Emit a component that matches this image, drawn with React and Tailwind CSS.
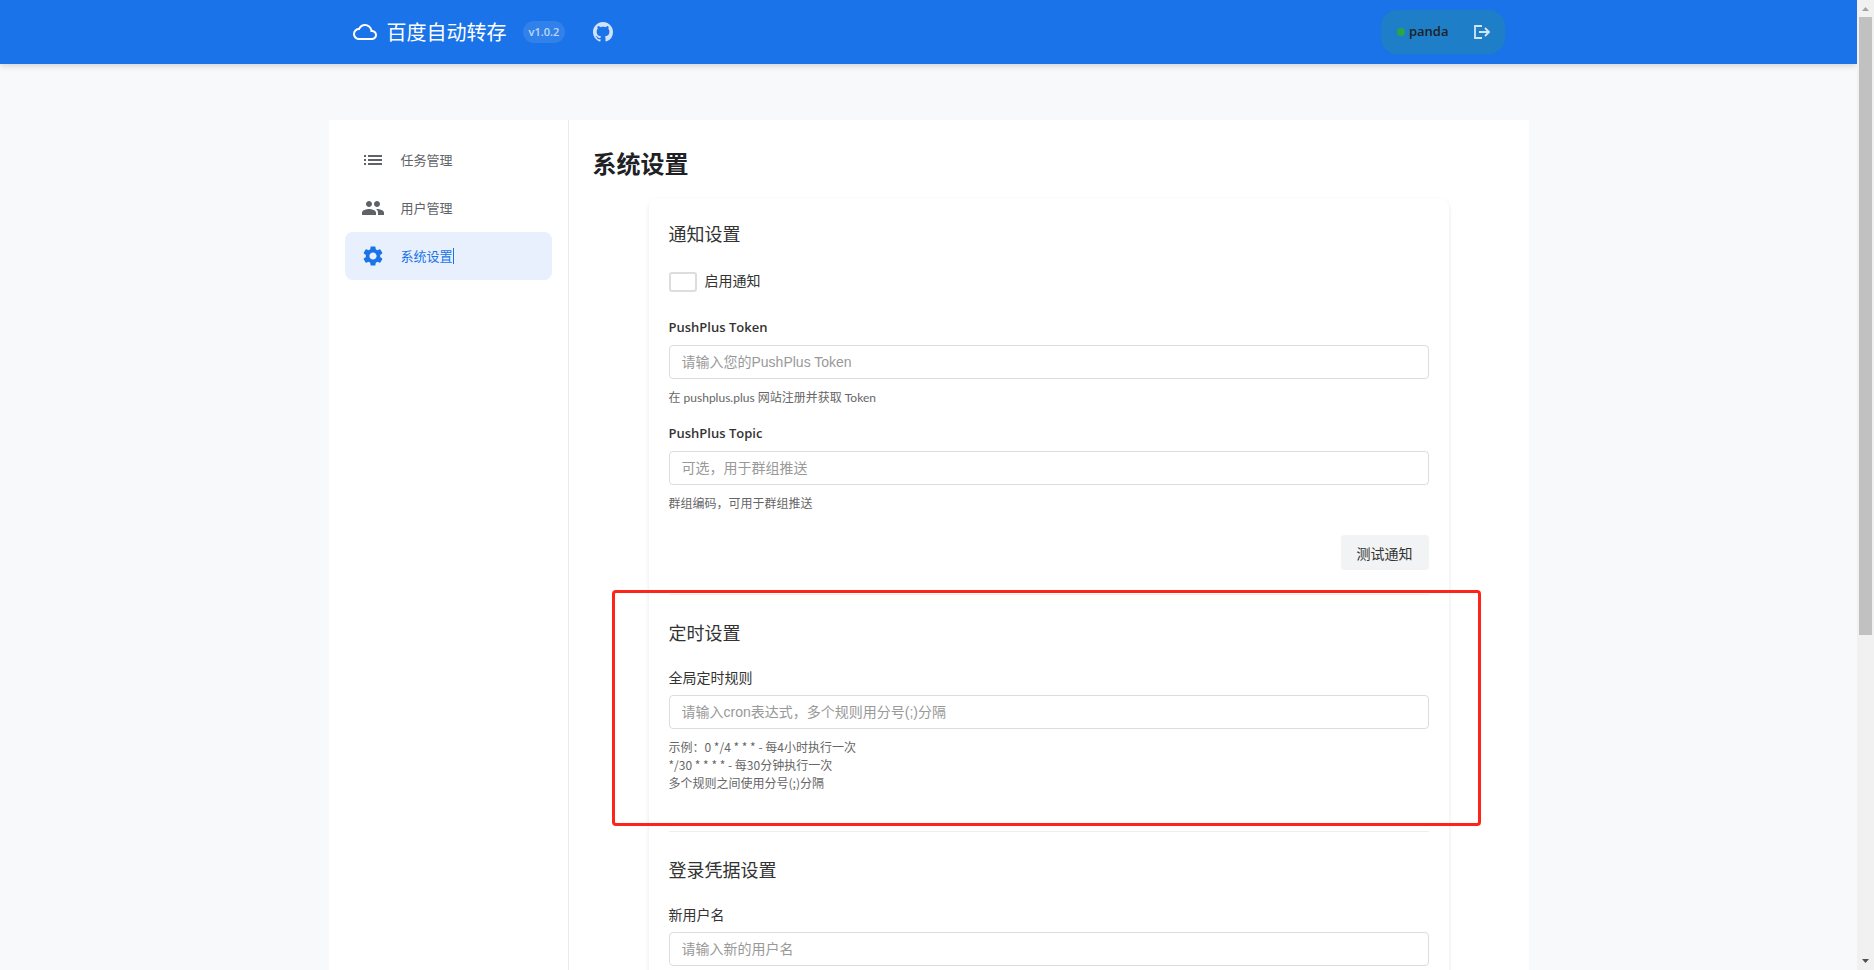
import { useState } from "react";
import { MdCloudQueue, MdList, MdPeople, MdSettings } from "react-icons/md";

const NAV_ITEMS = [
  { id: "tasks", label: "任务管理", icon: MdList },
  { id: "users", label: "用户管理", icon: MdPeople },
  { id: "settings", label: "系统设置", icon: MdSettings },
];

function GithubIcon() {
  return (
    <svg viewBox="0 0 16 16" className="size-5 fill-current" aria-hidden="true">
      <path d="M8 0C3.58 0 0 3.58 0 8c0 3.54 2.29 6.53 5.47 7.59.4.07.55-.17.55-.38 0-.19-.01-.82-.01-1.49-2.01.37-2.53-.49-2.69-.94-.09-.23-.48-.94-.82-1.13-.28-.15-.68-.52-.01-.53.63-.01 1.08.58 1.23.82.72 1.21 1.87.87 2.33.66.07-.52.28-.87.51-1.07-1.78-.2-3.64-.89-3.64-3.95 0-.87.31-1.59.82-2.15-.08-.2-.36-1.02.08-2.12 0 0 .67-.21 2.2.82.64-.18 1.32-.27 2-.27s1.36.09 2 .27c1.53-1.04 2.2-.82 2.2-.82.44 1.1.16 1.92.08 2.12.51.56.82 1.27.82 2.15 0 3.07-1.87 3.75-3.65 3.95.29.25.54.73.54 1.48 0 1.07-.01 1.93-.01 2.2 0 .21.15.46.55.38A8.01 8.01 0 0 0 16 8c0-4.42-3.58-8-8-8z" />
    </svg>
  );
}

function LogoutIcon() {
  return (
    <svg viewBox="0 0 18 14" className="h-3.5 w-[18px]" fill="none" stroke="currentColor" strokeWidth="1.8" aria-hidden="true">
      <path d="M9 1H2v12h7" />
      <path d="M6 7h10M12 3l4 4-4 4" />
    </svg>
  );
}

function Header() {
  return (
    <header className="relative z-10 shrink-0 bg-[#1a73e8] shadow-[0_2px_6px_rgba(60,64,67,0.2)]">
      <div className="mx-auto flex h-16 max-w-[1200px] items-center justify-between px-6">
        <div className="flex items-center text-white">
          <MdCloudQueue size={24} />
          <span className="ml-2.5 text-xl leading-7">百度自动转存</span>
          <span className="ml-4 rounded-xl bg-white/10 px-1.5 font-['Open_Sans',sans-serif] text-[11px] leading-[22px] font-semibold text-white/70">
            v1.0.2
          </span>
          <a href="#github" aria-label="GitHub" className="ml-7 text-white/80">
            <GithubIcon />
          </a>
        </div>

        <div className="flex h-11 items-center rounded-2xl bg-[#1e7ec8] pr-3.5 pl-4">
          <span className="size-2 rounded-full bg-[#28a745]" />
          <span className="ml-1 font-['Open_Sans',sans-serif] text-[13px] font-semibold text-[#202124]">
            panda
          </span>
          <button type="button" aria-label="退出登录" className="ml-6 text-white/80">
            <LogoutIcon />
          </button>
        </div>
      </div>
    </header>
  );
}

function Sidebar({ active, onSelect }) {
  return (
    <nav className="w-60 shrink-0 border-r border-[#e8eaed] p-4">
      {NAV_ITEMS.map(({ id, label, icon: Icon }) => {
        const selected = id === active;

        return (
          <button
            key={id}
            type="button"
            onClick={() => onSelect(id)}
            className={`flex h-12 w-full items-center gap-4 rounded-lg px-4 text-[13px] ${
              selected ? "bg-[#e8f0fe] text-[#1a73e8]" : "text-[#5f6368]"
            }`}
          >
            <Icon size={24} />
            <span className={selected ? "border-r border-[#1a73e8] leading-4" : "leading-4"}>
              {label}
            </span>
          </button>
        );
      })}
    </nav>
  );
}

function Section({ title, highlighted, children }) {
  return (
    <section className="relative border-t border-[#eee] pt-[23px] first:border-t-0 first:pt-0">
      <h2 className="text-lg leading-7 text-[#333]">{title}</h2>
      {children}
      {highlighted && (
        <div className="pointer-events-none absolute -top-[5px] -right-[52px] bottom-[5px] -left-[57px] rounded-sm border-3 border-[#ff2419]" />
      )}
    </section>
  );
}

function Field({ id, label, placeholder, latin, children }) {
  return (
    <div>
      <label
        htmlFor={id}
        className={`block leading-5 text-[#333] ${
          latin ? "font-['Open_Sans',sans-serif] text-[13px] font-semibold" : "text-sm"
        }`}
      >
        {label}
      </label>
      <input
        id={id}
        type="text"
        placeholder={placeholder}
        className="mt-2 block h-[34px] w-full rounded border border-[#ddd] px-3 font-['Liberation_Sans','Noto_Sans_CJK_SC',sans-serif] text-sm text-[#333] outline-none placeholder:text-[#999]"
      />
      {children && <p className="mt-[9px] text-xs leading-[18px] text-[#666]">{children}</p>}
    </div>
  );
}

function SettingsCard() {
  return (
    <div className="mx-auto mt-[17px] max-w-[800px] rounded-lg p-5 shadow-[0_2px_4px_rgba(0,0,0,0.1)]">
      <Section title="通知设置">
        <label className="mt-[19px] flex h-7 items-start gap-2 text-sm leading-7 text-[#333]">
          <input
            type="checkbox"
            className="mt-1.5 h-5 w-7 appearance-none rounded-[3px] border-2 border-[#ddd] bg-white checked:bg-[#1a73e8]"
          />
          启用通知
        </label>
        <div className="mt-[23px] space-y-4">
          <Field id="pp-token" label="PushPlus Token" placeholder="请输入您的PushPlus Token" latin>
            <span className="font-['Lato','Noto_Sans_CJK_SC',sans-serif]">
              在 pushplus.plus 网站注册并获取 Token
            </span>
          </Field>
          <Field id="pp-topic" label="PushPlus Topic" placeholder="可选，用于群组推送" latin>
            群组编码，可用于群组推送
          </Field>
        </div>
        <div className="mt-[23px] flex justify-end pb-6">
          <button type="button" className="h-[35px] rounded bg-[#f1f3f4] px-4 text-sm text-[#333]">
            测试通知
          </button>
        </div>
      </Section>

      <Section title="定时设置" highlighted>
        <div className="mt-[21px] pb-[39px]">
          <Field id="cron" label="全局定时规则" placeholder="请输入cron表达式，多个规则用分号(;)分隔">
            示例：0 */4 * * * - 每4小时执行一次
            <br />
            */30 * * * * - 每30分钟执行一次
            <br />
            多个规则之间使用分号(;)分隔
          </Field>
        </div>
      </Section>

      <Section title="登录凭据设置">
        <div className="mt-[21px] pb-[39px]">
          <Field id="username" label="新用户名" placeholder="请输入新的用户名" />
        </div>
      </Section>
    </div>
  );
}

function Scrollbar() {
  return (
    <div className="flex w-[17px] shrink-0 flex-col items-center bg-[#f1f1f1]" aria-hidden="true">
      <svg viewBox="0 0 17 17" className="size-[17px] shrink-0 fill-[#a3a3a3]">
        <path d="M5 11h7L8.500 7z" />
      </svg>
      <div className="min-h-0 w-full flex-1 px-0.5">
        <div className="h-[66%] bg-[#c1c1c1]" />
      </div>
      <svg viewBox="0 0 17 17" className="size-[17px] shrink-0 fill-[#505050]">
        <path d="M5 6h7l-3.500 4z" />
      </svg>
    </div>
  );
}

export default function App() {
  const [active, setActive] = useState("settings");

  return (
    <div className="flex h-screen bg-[#f8f9fb] font-['Noto_Sans_CJK_SC',sans-serif]">
      <div className="flex min-w-0 flex-1 flex-col overflow-hidden">
        <Header />
        <div className="mx-auto mt-14 flex w-full max-w-[1200px] flex-1 bg-white">
          <Sidebar active={active} onSelect={setActive} />
          <main className="min-w-0 flex-1 p-6">
            <h1 className="text-2xl leading-[38px] font-bold text-[#202124]">系统设置</h1>
            <SettingsCard />
          </main>
        </div>
      </div>
      <Scrollbar />
    </div>
  );
}
